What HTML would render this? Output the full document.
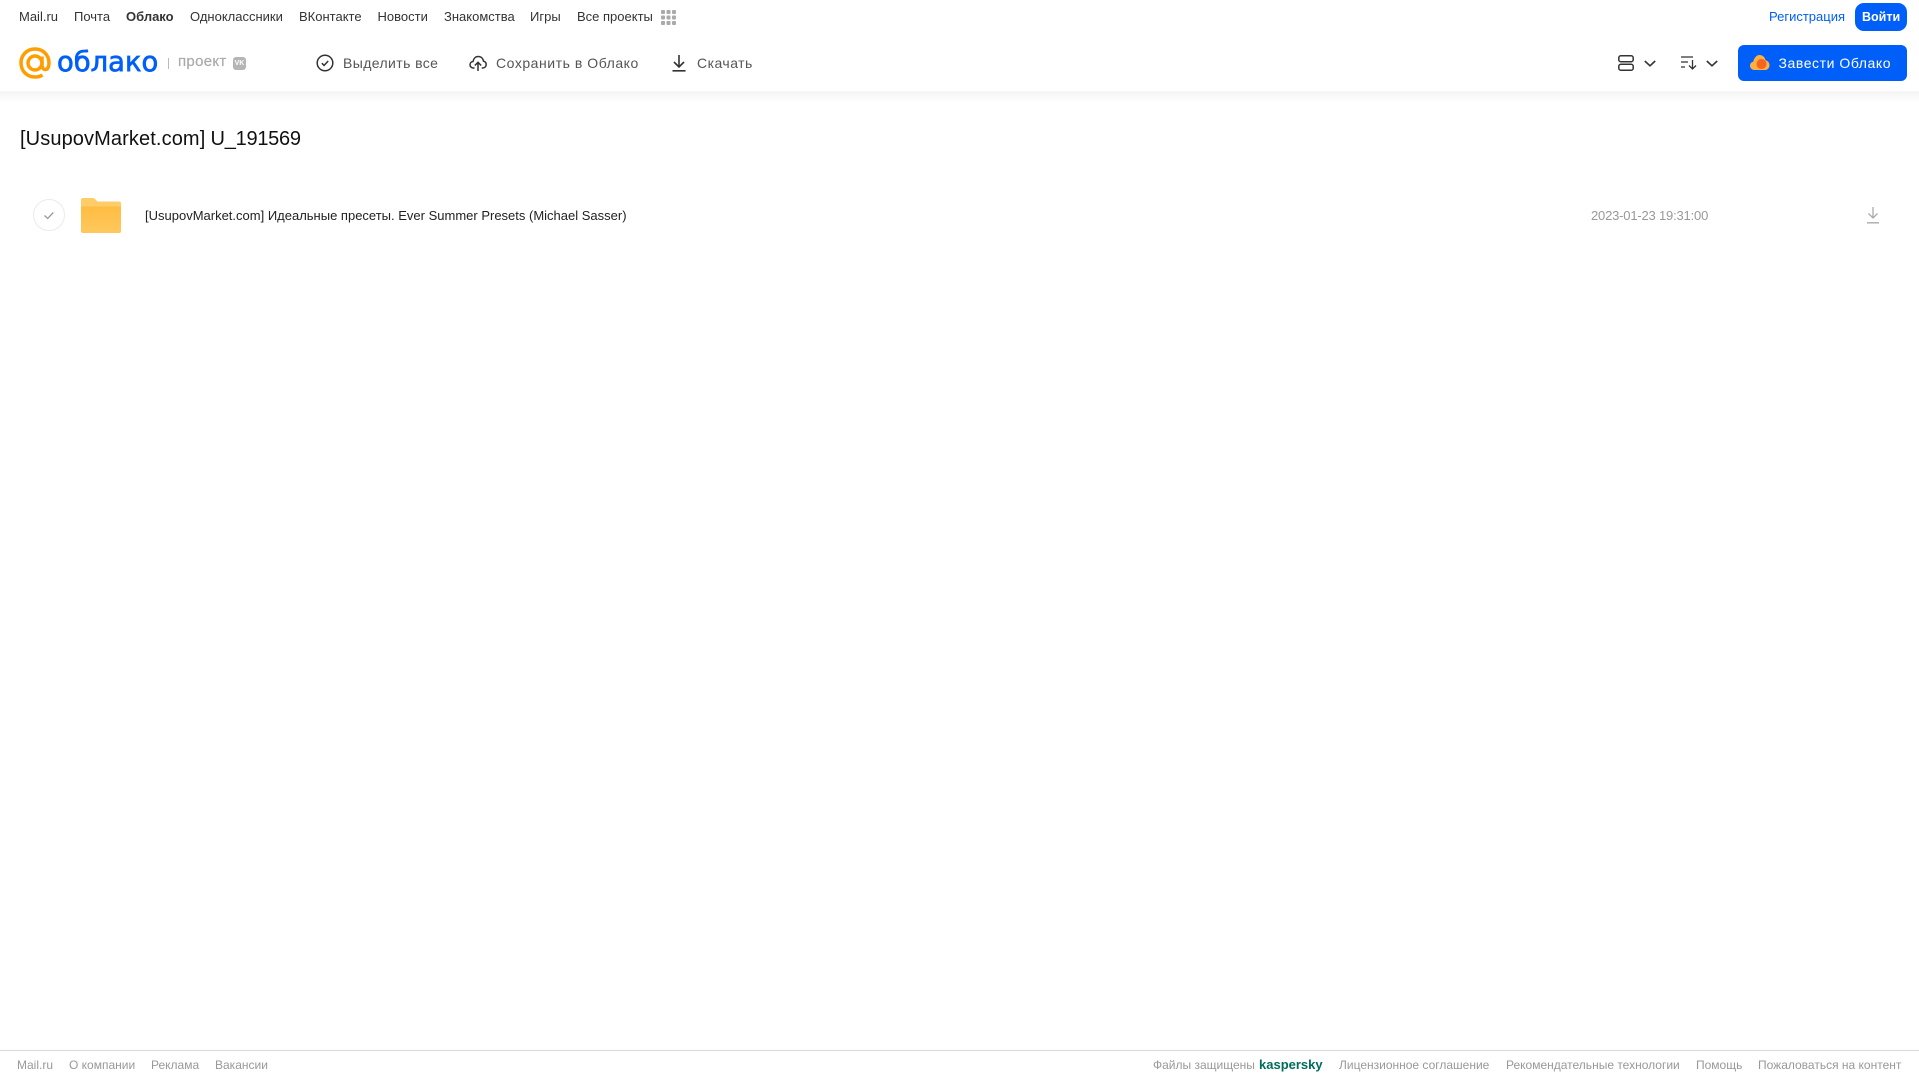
<!DOCTYPE html>
<html lang="ru"><head><meta charset="utf-8"><title>Облако</title>
<style>
html,body{margin:0;padding:0;background:#fff}
body{width:1919px;height:1079px;position:relative;overflow:hidden;font-family:"Liberation Sans",Arial,sans-serif}
.t{position:absolute;white-space:nowrap;line-height:20px;height:20px}
.n{top:7px;font-size:13px;color:#333}
.a{top:53px;font-size:14px;color:#555;letter-spacing:.54px}
.f{top:1055px;font-size:12px;color:#999}
svg{position:absolute;display:block}
#sh{position:absolute;left:0;top:91px;width:1919px;height:12px;background:linear-gradient(#f5f5f5,#fff)}
#btn1{position:absolute;left:1855px;top:3px;width:52px;height:28px;background:#005ff9;border-radius:9px}
#btn2{position:absolute;left:1738px;top:45px;width:169px;height:36px;background:#005ff9;border-radius:6px}
#ln{position:absolute;left:0;top:1050px;width:1919px;height:1px;background:#d9d9d9}
</style></head><body>
<span class="t n" style="left:19px">Mail.ru</span>
<span class="t n" style="left:74px">Почта</span>
<span class="t n" style="left:126px;font-weight:bold">Облако</span>
<span class="t n" style="left:190px">Одноклассники</span>
<span class="t n" style="left:299px">ВКонтакте</span>
<span class="t n" style="left:377.500px">Новости</span>
<span class="t n" style="left:444px">Знакомства</span>
<span class="t n" style="left:530px">Игры</span>
<span class="t n" style="left:577px">Все проекты</span>
<svg style="left:661px;top:10px" width="15" height="15" viewBox="0 0 15 15" fill="#aaa"><rect x="0" y="0" width="4" height="4" rx="1"/><rect x="5.500" y="0" width="4" height="4" rx="1"/><rect x="11" y="0" width="4" height="4" rx="1"/><rect x="0" y="5.500" width="4" height="4" rx="1"/><rect x="5.500" y="5.500" width="4" height="4" rx="1"/><rect x="11" y="5.500" width="4" height="4" rx="1"/><rect x="0" y="11" width="4" height="4" rx="1"/><rect x="5.500" y="11" width="4" height="4" rx="1"/><rect x="11" y="11" width="4" height="4" rx="1"/></svg>
<span class="t n" style="left:1769px;color:#005ff9">Регистрация</span>
<div id="btn1"></div>
<span class="t n" style="left:1862px;color:#fff;font-weight:bold;font-size:12.500px">Войти</span>

<svg style="left:18px;top:46px" width="34" height="34" viewBox="0 0 34 34" fill="none" stroke="#ff9e00" stroke-width="3.500"><circle cx="17" cy="17" r="7"/><path d="M24 10.500V19c0 3 1.500 4.500 3.500 4.500S31 21 31 17C31 9 25 3 17 3S3 9 3 17s6 14 14 14c3 0 5.500-.7 7.500-2"/></svg>
<span class="t" style="left:57px;top:47px;height:32px;line-height:32px;font-family:'DejaVu Sans','Liberation Sans',sans-serif;font-size:27.400px;color:#005ff9;-webkit-text-stroke:.7px #005ff9">облако</span>
<div style="position:absolute;left:168px;top:58px;width:1px;height:11px;background:#bbb"></div>
<span class="t" style="left:178px;top:52px;font-size:15px;color:#aaa;-webkit-text-stroke:.2px #aaa;letter-spacing:.3px">проект</span>
<div style="position:absolute;left:233px;top:57px;width:13px;height:13px;background:#b5b5b5;border-radius:3px;color:#fff;font-size:7px;font-weight:bold;line-height:13px;text-align:center">VK</div>

<svg style="left:316px;top:54px" width="18" height="18" viewBox="0 0 18 18" fill="none" stroke="#333" stroke-width="1.500"><circle cx="9" cy="9" r="7.800"/><path d="M5.800 9.200l2.300 2.200 4.100-4.400"/></svg>
<span class="t a" style="left:343px;letter-spacing:.4px">Выделить все</span>
<svg style="left:469px;top:54px" width="18" height="18" viewBox="0 0 18 18" fill="none" stroke="#333" stroke-width="1.500"><path d="M5.500 14H4.500C2.500 14 1 12.500 1 10.700S2.300 7.700 4 7.500C4.500 4.500 6.500 2.500 9.300 2.500c2.800 0 4.700 2 5.200 4.600 1.500.4 2.700 1.700 2.700 3.400 0 2-1.500 3.500-3.500 3.500h-1"/><path d="M9 17V8.500M5.800 11.500L9 8.300l3.200 3.200"/></svg>
<span class="t a" style="left:496px">Сохранить в Облако</span>
<svg style="left:671px;top:54px" width="16" height="18" viewBox="0 0 16 18" fill="none" stroke="#333" stroke-width="1.600"><path d="M8 1v11.500M3 8l5 5 5-5M1.500 16.800h13"/></svg>
<span class="t a" style="left:697px;letter-spacing:.47px">Скачать</span>

<svg style="left:1618px;top:55px" width="16" height="16" viewBox="0 0 16 16" fill="none" stroke="#333" stroke-width="1.500"><rect x=".8" y=".8" width="14.400" height="5.900" rx="2"/><rect x=".8" y="9.300" width="14.400" height="5.900" rx="2"/></svg>
<svg style="left:1644px;top:60px" width="12" height="7" viewBox="0 0 12 7" fill="none" stroke="#333" stroke-width="1.600"><path d="M.8 1L6 5.800 11.200 1"/></svg>
<svg style="left:1681px;top:56px" width="16" height="14" viewBox="0 0 16 14" fill="none" stroke="#333" stroke-width="1.300"><path d="M0 1h12M0 6h7M0 11h4M11.500 4v9M8 9.500l3.500 3.500L15 9.500"/></svg>
<svg style="left:1706px;top:60px" width="12" height="7" viewBox="0 0 12 7" fill="none" stroke="#333" stroke-width="1.600"><path d="M.8 1L6 5.800 11.200 1"/></svg>
<div id="btn2"></div>
<svg style="left:1750px;top:54px" width="20" height="17" viewBox="0 0 20 17"><path d="M4.500 16C2 16 0 14.200 0 11.800c0-2 1.300-3.600 3.200-4C4 4 6.500 1 9.500 1c3 0 5.500 2.300 6 5.200 2.300.4 4 2.500 4 5 0 2.700-2 4.800-4.500 4.800z" fill="#ffb040"/><circle cx="11.500" cy="10" r="5" fill="#f5651f"/></svg>
<span class="t a" style="left:1778.500px;color:#fff;letter-spacing:.56px">Завести Облако</span>
<div id="sh"></div>

<span class="t" style="left:20px;top:127px;height:24px;line-height:24px;font-size:20px;color:#111;letter-spacing:.11px">[UsupovMarket.com]</span>
<span class="t" style="left:210.500px;top:127px;height:24px;line-height:24px;font-size:20px;color:#111;letter-spacing:-.25px">U_191569</span>
<svg style="left:33px;top:199px" width="33" height="33" viewBox="0 0 33 33" fill="none"><circle cx="16" cy="16" r="15.500" stroke="#ebebeb"/><path d="M11.500 16.500l3.200 3 5.600-6" stroke="#999" stroke-width="1.300"/></svg>
<svg style="left:81px;top:198px" width="40" height="35" viewBox="0 0 40 35"><defs><linearGradient id="g" x1="0" y1="0" x2="0" y2="1"><stop offset="0" stop-color="#ffbc42"/><stop offset="1" stop-color="#ffc85e"/></linearGradient></defs><path d="M2 0h9c2 0 3 .8 4 2l1.500 1.500H38a2 2 0 0 1 2 2V33a2 2 0 0 1-2 2H2a2 2 0 0 1-2-2V2a2 2 0 0 1 2-2z" fill="#ffcd68"/><path d="M0 8.500h40V33a2 2 0 0 1-2 2H2a2 2 0 0 1-2-2z" fill="url(#g)"/></svg>
<span class="t" style="left:145px;top:206px;font-size:13px;color:#222">[UsupovMarket.com] Идеальные пресеты. Ever Summer Presets (Michael Sasser)</span>
<span class="t" style="left:1591px;top:206px;font-size:13px;color:#999;letter-spacing:-.19px">2023-01-23 19:31:00</span>
<svg style="left:1866px;top:206px" width="14" height="18" viewBox="0 0 14 18" fill="none" stroke="#aaa" stroke-width="1.300"><path d="M7 1v11M2.500 7.500L7 12l4.500-4.500M1 16.800h12"/></svg>

<div id="ln"></div>
<span class="t f" style="left:17px">Mail.ru</span>
<span class="t f" style="left:69px">О компании</span>
<span class="t f" style="left:151px">Реклама</span>
<span class="t f" style="left:215px">Вакансии</span>
<span class="t f" style="left:1153px">Файлы защищены</span>
<span class="t f" style="left:1259px;color:#006d5c;font-weight:bold;font-size:13px">kaspersky</span>
<span class="t f" style="left:1339px">Лицензионное соглашение</span>
<span class="t f" style="left:1506px">Рекомендательные технологии</span>
<span class="t f" style="left:1696px">Помощь</span>
<span class="t f" style="left:1758px">Пожаловаться на контент</span>
</body></html>
